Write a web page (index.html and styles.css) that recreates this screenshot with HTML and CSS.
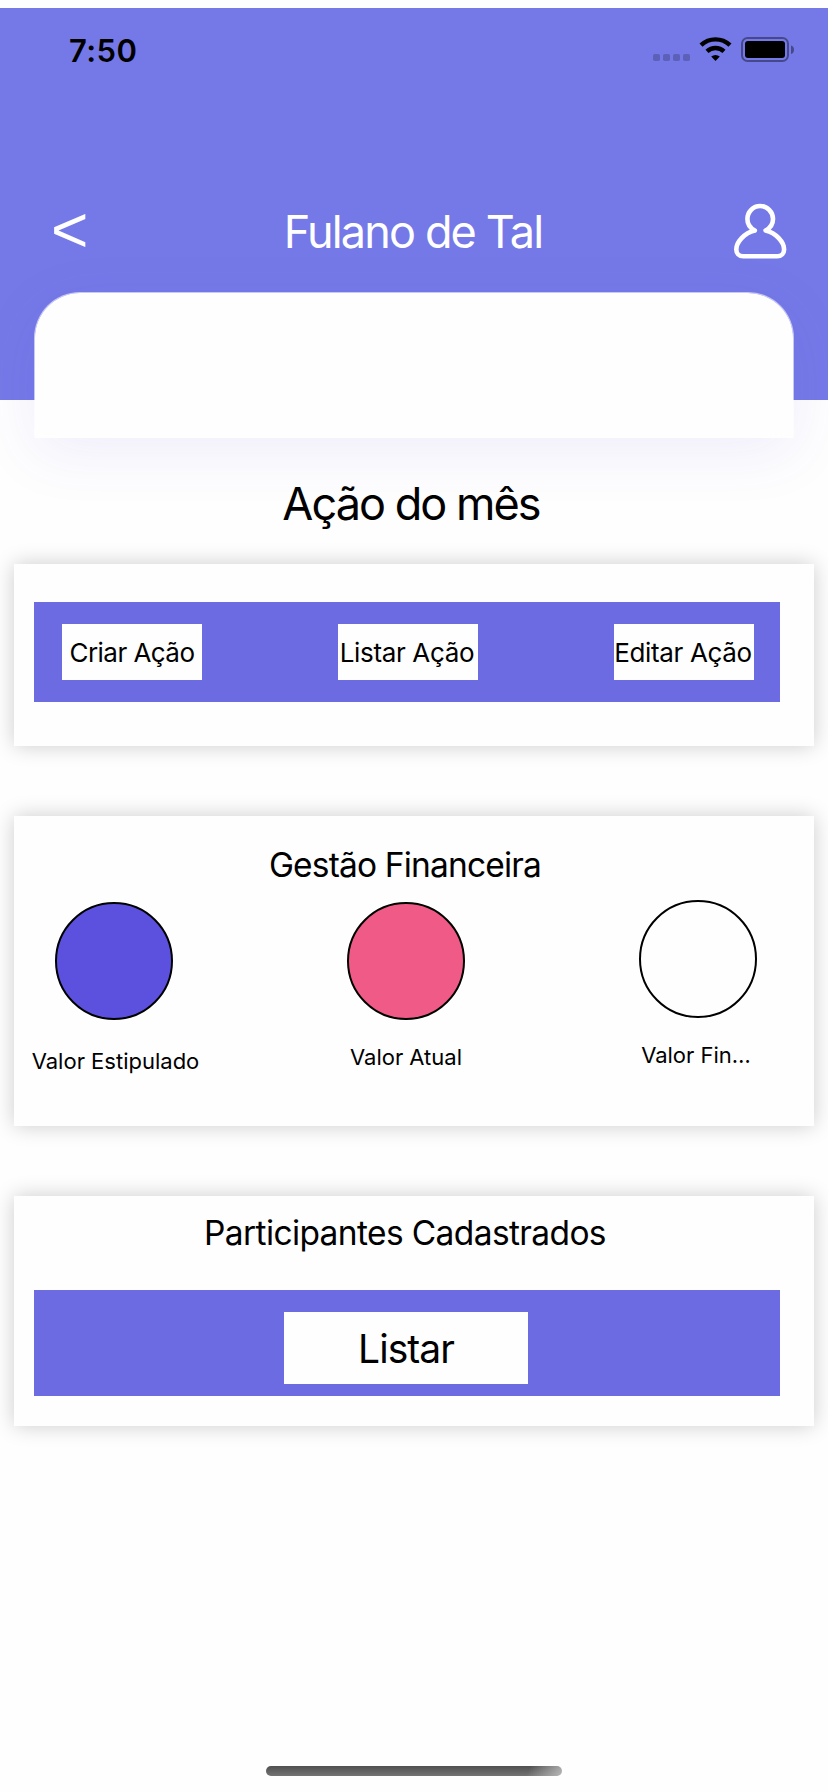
FILE: index.html
```html
<!DOCTYPE html>
<html lang="pt-BR">
<head>
<meta charset="utf-8">
<title>Fulano de Tal</title>
<link rel="stylesheet" href="styles.css">
</head>
<body>
<div class="screen">
  <header class="header">
    <div class="status">
      <span class="time">7:50</span>
      <svg class="indicators" width="146" height="30" viewBox="0 0 146 30">
        <g fill="#000" opacity=".2">
          <rect x="3" y="19" width="7" height="7" rx="1.8"/>
          <rect x="13" y="19" width="7" height="7" rx="1.8"/>
          <rect x="23" y="19" width="7" height="7" rx="1.8"/>
          <rect x="33" y="19" width="7" height="7" rx="1.8"/>
        </g>
        <g fill="none" stroke="#000" stroke-width="4.4">
          <path d="M51 10.2a21 21 0 0 1 29 0"/>
          <path d="M57 16.3a12.4 12.4 0 0 1 17 0"/>
        </g>
        <path d="M65.500 26l-4.300-4.400a6.500 6.500 0 0 1 8.600 0z"/>
        <rect x="92" y="3" width="46" height="23" rx="5.500" fill="none" stroke="#000" stroke-opacity=".4" stroke-width="2"/>
        <rect x="95" y="6" width="40" height="17" rx="3"/>
        <path d="M141 10.500c4 1 4 7.500 0 8.500z" opacity=".4"/>
      </svg>
    </div>
    <nav class="nav">
      <span class="back">&lt;</span>
      <h1 class="title">Fulano de Tal</h1>
      <svg class="user" width="56" height="60" viewBox="0 0 56 60" fill="none" stroke="#fff" stroke-width="4.600" stroke-linecap="round" stroke-linejoin="round">
        <path d="M22.800 28.500C18 26 15.400 21.800 15.400 17A12.800 13 0 0 1 41 17C41 21.800 38.400 26 33.600 28.500C44 31 52.100 40 52.100 47.500C52.100 51.600 49.200 54.300 45.200 54.300H11.200C7.200 54.300 4.300 51.600 4.300 47.500C4.300 40 12.400 31 22.800 28.500" />
      </svg>
    </nav>
  </header>

  <div class="hero"></div>

  <h2 class="heading">Ação do mês</h2>

  <section class="card card-actions">
    <div class="bar bar-actions">
      <button class="btn">Criar Ação</button>
      <button class="btn btn-wide">Listar Ação</button>
      <button class="btn btn-wide">Editar Ação</button>
    </div>
  </section>

  <section class="card card-finance">
    <h3 class="card-title card-title-finance">Gestão Financeira</h3>
    <div class="values">
      <div class="value value-planned">
        <div class="circle circle-planned"></div>
        <span class="label">Valor Estipulado</span>
      </div>
      <div class="value value-current">
        <div class="circle circle-current"></div>
        <span class="label">Valor Atual</span>
      </div>
      <div class="value value-final">
        <div class="circle"></div>
        <span class="label">Valor Fin…</span>
      </div>
    </div>
  </section>

  <section class="card card-people">
    <h3 class="card-title">Participantes Cadastrados</h3>
    <div class="bar bar-people">
      <button class="btn btn-large">Listar</button>
    </div>
  </section>

  <div class="home-indicator"></div>
</div>
</body>
</html>
```

FILE: styles.css
```css
* { box-sizing: border-box; }

body {
  margin: 0;
  background: #fefefe;
  color: #000;
  font-family: Inter, "Liberation Sans", sans-serif;
}

h1, h2, h3 { margin: 0; font-weight: 400; }

.screen {
  display: flex;
  flex-direction: column;
  width: 828px;
  height: 1792px;
  padding-top: 8px;
  overflow: hidden;
}

.header {
  flex: none;
  height: 392px;
  padding: 22px 32px 0 52px;
  background: #7579e7;
}

.status {
  display: flex;
  justify-content: space-between;
  align-items: center;
  height: 40px;
  padding-left: 17px;
}

.time { font-size: 31px; font-weight: 600; letter-spacing: .4px; }

.nav {
  display: grid;
  grid-template-columns: 43px 1fr 56px;
  align-items: center;
  height: 60px;
  margin: 132px 8px 0 -1px;
}

.back {
  color: #fff;
  font: 64px "Liberation Sans", sans-serif;
  line-height: 60px;
  margin-top: -5px;
}

.title {
  color: #fff;
  font-size: 45px;
  line-height: 60px;
  letter-spacing: -1.85px;
  text-align: center;
  white-space: nowrap;
}

.hero {
  flex: none;
  height: 146px;
  margin: -108px 34px 0 34px;
  background: #fefefe;
  background-clip: padding-box;
  border: 1px solid rgba(255, 255, 255, .6);
  border-bottom: 0;
  border-radius: 46px 46px 0 0;
  box-shadow: 0 14px 60px rgba(90, 70, 220, .09);
}

.heading {
  height: 60px;
  margin: 36px 6px 0 0;
  font-size: 45px;
  line-height: 60px;
  letter-spacing: -1.95px;
  text-align: center;
}

.card {
  flex: none;
  width: 800px;
  margin-left: 14px;
  padding-left: 20px;
  background: #fefefe;
  box-shadow: 0 0 20px rgba(0, 0, 0, .2);
}

.card-actions { height: 182px; margin-top: 30px; padding-top: 38px; }
.card-finance { height: 310px; margin-top: 70px; padding-top: 29px; }
.card-people { height: 230px; margin-top: 70px; padding-top: 17px; }

.bar { width: 746px; background: #6c6be2; }

.bar-actions {
  display: flex;
  justify-content: space-between;
  align-items: center;
  height: 100px;
  padding: 0 26px 0 28px;
}

.btn {
  display: flex;
  justify-content: center;
  align-items: center;
  width: 140px;
  height: 56px;
  padding: 0;
  border: 0;
  background: #fefefe;
  color: #000;
  font: 400 26px Inter, "Liberation Sans", sans-serif;
  letter-spacing: -.55px;
  white-space: nowrap;
}

.btn-wide { padding-right: 2px; letter-spacing: -.35px; }

.card-title {
  width: 742px;
  height: 40px;
  font-size: 33.5px;
  line-height: 40px;
  letter-spacing: -.62px;
  text-align: center;
}

.card-title-finance { letter-spacing: -.82px; }

.values {
  display: flex;
  justify-content: space-between;
  width: 786px;
  margin-left: -21px;
}

.value { display: flex; flex-direction: column; align-items: center; width: 202px; }
.value-planned { padding-top: 17px; gap: 26px; }
.value-current { padding-top: 17px; gap: 22px; }
.value-final { padding-top: 15px; gap: 22px; }

.circle { width: 118px; height: 118px; border: 2px solid #000; border-radius: 50%; }
.circle-planned { background: #5b51de; }
.circle-current { background: #f05a87; }

.label { font-size: 22px; line-height: 30px; white-space: nowrap; }
.value-planned .label { margin-left: 3px; }
.value-final .label { margin-right: 4px; }

.bar-people { height: 106px; margin-top: 37px; padding: 22px 0 0 250px; }

.btn-large { width: 244px; height: 72px; font-size: 39px; letter-spacing: -.95px; }

.home-indicator {
  flex: none;
  width: 296px;
  height: 10px;
  margin: 340px 0 0 266px;
  border-radius: 5px;
  background:
    linear-gradient(115deg, transparent 88%, rgba(190, 190, 190, .9) 100%),
    linear-gradient(#505050, #737373);
}
```
